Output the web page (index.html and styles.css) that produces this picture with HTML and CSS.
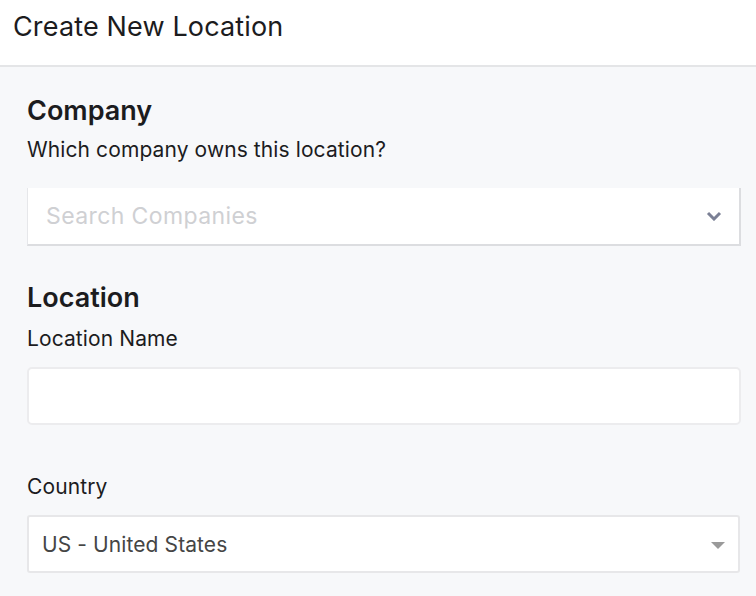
FILE: index.html
```html
<!DOCTYPE html>
<html lang="en">
<head>
<meta charset="utf-8">
<title>Create New Location</title>
<link rel="stylesheet" href="styles.css">
</head>
<body>
<header class="topbar">
  <h1 class="title">Create New Location</h1>
</header>
<main class="content">
  <section class="section">
    <h2 class="heading">Company</h2>
    <p class="label">Which company owns this location?</p>
    <div class="search">
      <span class="placeholder">Search Companies</span>
      <svg class="chevron" width="16" height="10" viewBox="0 0 16 10"><path d="M2 2 L8 8 L14 2" fill="none" stroke="#7b8095" stroke-width="3" stroke-linecap="butt" stroke-linejoin="miter"/></svg>
    </div>
  </section>
  <section class="section section-location">
    <h2 class="heading">Location</h2>
    <label class="label label-name">Location Name</label>
    <div class="input"></div>
    <label class="label label-country">Country</label>
    <div class="select">
      <span class="select-value">US - United States</span>
      <span class="caret"></span>
    </div>
  </section>
</main>
</body>
</html>
```

FILE: styles.css
```css
* { box-sizing: border-box; }
html, body { margin: 0; padding: 0; }
body {
  font-family: Inter, "Noto Sans", "Liberation Sans", sans-serif;
  background: #f7f8fa;
  color: #1c1c1e;
  width: 756px;
  height: 596px;
  overflow: hidden;
}
.topbar {
  background: #ffffff;
  height: 67px;
  border-bottom: 2px solid #e4e5e7;
  padding: 11px 13px 0;
}
.title {
  margin: 0;
  font-size: 27px;
  font-weight: 400;
  line-height: 32px;
  letter-spacing: 0.15px;
}
.content {
  padding: 28px 15px 0 27px;
}
.heading {
  margin: 0;
  font-size: 27px;
  font-weight: 600;
  line-height: 32px;
}
.label {
  display: block;
  margin: 10px 0 0;
  font-size: 21px;
  line-height: 26px;
  font-weight: 400;
  letter-spacing: 0.1px;
}
.search {
  margin-top: 25px;
  height: 58px;
  background: #ffffff;
  border-left: 1px solid #e6e7ea;
  border-bottom: 2px solid #dcdde0;
  border-right: 2px solid #dcdde0;
  display: flex;
  align-items: center;
  justify-content: space-between;
  padding: 0 17px 0 18px;
}
.placeholder {
  font-size: 23px;
  color: #cfd0d3;
  letter-spacing: 0.4px;
}
.chevron { display: block; }
.section-location { margin-top: 36px; }
.label-name { margin-top: 12px; }
.input {
  margin-top: 15px;
  height: 58px;
  background: #ffffff;
  border: 2px solid #ececee;
  border-radius: 5px;
}
.label-country { margin-top: 49px; }
.select {
  margin-top: 15px;
  width: 713px;
  height: 58px;
  background: #ffffff;
  border: 2px solid #e7e7e9;
  border-radius: 3px;
  display: flex;
  align-items: center;
  justify-content: space-between;
  padding: 0 13px 0 13px;
}
.select-value {
  font-size: 21px;
  color: #454545;
  letter-spacing: 0.1px;
}
.caret {
  width: 0;
  height: 0;
  border-left: 7px solid transparent;
  border-right: 7px solid transparent;
  border-top: 7px solid #9a9a9a;
  margin-top: 2px;
}
```
